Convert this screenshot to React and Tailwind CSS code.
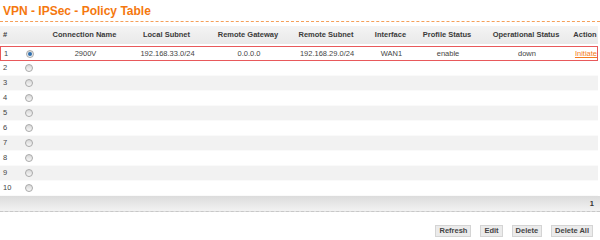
import React from 'react';

const cols = 'grid grid-cols-[18px_20px_87px_82px_80px_71px_61px_67px_74px_38px]';

// ajustes para centrar cada columna como en la captura
const cellCls = [
  'pl-[3px]',
  'flex justify-center',
  'text-center pl-[6px]',
  'text-center pl-[1px]',
  'text-center pl-[2px]',
  'text-center pl-[7px]',
  'text-center pl-[4px]',
  'text-center pr-[11px]',
  'text-center pl-[6px]',
  'text-center pl-[12px]',
];

const headers = ['#', '', 'Connection Name', 'Local Subnet', 'Remote Gateway', 'Remote Subnet', 'Interface', 'Profile Status', 'Operational Status', 'Action'];

function Radio({ checked }) {
  return (
    <span className="flex h-[8px] w-[8px] items-center justify-center rounded-full border border-[#a9a9a9] bg-gradient-to-b from-[#d8d8d8] to-[#f7f7f7]">
      {checked && <span className="h-[4px] w-[4px] rounded-full bg-[#2f6fae]" />}
    </span>
  );
}

function Row({ n, data }) {
  const gray = n % 2 === 1 && n !== 1;
  const values = data ? [data.name, data.local, data.gateway, data.remote, data.iface, data.profile, data.op] : [];
  return (
    <div
      className={`${cols} h-[15px] items-center text-[#444] ${gray ? 'bg-[#f2f2f2]' : 'bg-white'} ${
        n === 1 ? 'border border-[#e8595b]' : 'border-b border-[#fafafa]'
      }`}
    >
      <div className={cellCls[0]}>{n}</div>
      <div className={`${cellCls[1]} pl-[1px]`}>
        <Radio checked={n === 1} />
      </div>
      {values.map((v, i) => (
        <div key={i} className={cellCls[i + 2]}>
          {v}
        </div>
      ))}
      {data && (
        <div className={cellCls[9]}>
          <a className="text-[#f47a20] underline">Initiate</a>
        </div>
      )}
    </div>
  );
}

export default function App() {
  const first = {
    name: '2900V',
    local: '192.168.33.0/24',
    gateway: '0.0.0.0',
    remote: '192.168.29.0/24',
    iface: 'WAN1',
    profile: 'enable',
    op: 'down',
  };

  return (
    <div className="h-[240px] w-[600px] overflow-hidden bg-white font-['Liberation_Sans',Arial,sans-serif] text-[7.5px]">
      {/* Titulo */}
      <div className="h-[22px] border-b border-dashed border-[#f5a05a] pl-[3px] pt-[3px]">
        <h1 className="text-[12px] font-bold leading-[16px] text-[#f5780f]">VPN - IPSec - Policy Table</h1>
      </div>

      {/* Tabla */}
      <div className="mt-[4px] w-[598px]">
        <div className={`${cols} h-[18px] items-center bg-gradient-to-b from-[#f4f4f4] to-[#e9e9e9] font-bold text-[#3a3a3a]`}>
          {headers.map((h, i) => (
            <div key={i} className={cellCls[i]}>
              {h}
            </div>
          ))}
        </div>
        <div className="h-[2px]" />
        {[1, 2, 3, 4, 5, 6, 7, 8, 9, 10].map((n) => (
          <Row key={n} n={n} data={n === 1 ? first : null} />
        ))}
      </div>

      {/* Paginacion */}
      <div className="flex h-[16px] w-[600px] items-center justify-end border-b border-dashed border-[#c8c8c8] bg-gradient-to-b from-[#dcdcdc] to-[#f2f2f2] pr-[6px] font-bold text-[#333]">
        1
      </div>

      {/* Botones */}
      <div className="mt-[13px] flex justify-end gap-[9px] pr-[7px]">
        {['Refresh', 'Edit', 'Delete', 'Delete All'].map((b) => (
          <button
            key={b}
            className="h-[12px] border border-[#d4d4d4] bg-[#ebebeb] px-[3px] text-[7.5px] font-bold leading-[10px] text-[#444]"
          >
            {b}
          </button>
        ))}
      </div>
    </div>
  );
}
